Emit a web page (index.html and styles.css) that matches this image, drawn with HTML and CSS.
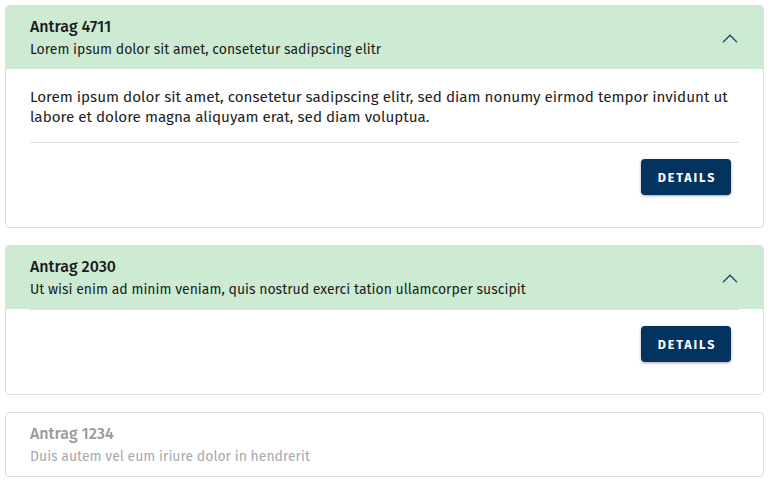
FILE: index.html
```html
<!DOCTYPE html>
<html lang="de">
<head>
<meta charset="utf-8">
<link rel="stylesheet" href="styles.css">
</head>
<body>
<div class="list">
  <section class="card">
    <header class="card-head open">
      <div class="head-text">
        <div class="title">Antrag 4711</div>
        <div class="subtitle">Lorem ipsum dolor sit amet, consetetur sadipscing elitr</div>
      </div>
      <svg class="chev" width="16" height="9" viewBox="0 0 16 9"><path d="M1 8.2 L8 1.2 L15 8.2" fill="none" stroke="#1f4a72" stroke-width="1.4"/></svg>
    </header>
    <div class="card-content">Lorem ipsum dolor sit amet, consetetur sadipscing elitr, sed diam nonumy eirmod tempor invidunt ut labore et dolore magna aliquyam erat, sed diam voluptua.</div>
    <div class="actions"><button class="btn">DETAILS</button></div>
  </section>
  <section class="card">
    <header class="card-head open">
      <div class="head-text">
        <div class="title">Antrag 2030</div>
        <div class="subtitle">Ut wisi enim ad minim veniam, quis nostrud exerci tation ullamcorper suscipit</div>
      </div>
      <svg class="chev" width="16" height="9" viewBox="0 0 16 9"><path d="M1 8.2 L8 1.2 L15 8.2" fill="none" stroke="#1f4a72" stroke-width="1.4"/></svg>
    </header>
    <div class="actions"><button class="btn">DETAILS</button></div>
  </section>
  <section class="card disabled">
    <header class="card-head">
      <div class="head-text">
        <div class="title">Antrag 1234</div>
        <div class="subtitle">Duis autem vel eum iriure dolor in hendrerit</div>
      </div>
    </header>
  </section>
</div>
</body>
</html>
```
FILE: styles.css
```css
* { box-sizing: border-box; }
body {
  margin: 0;
  background: #fff;
  font-family: "Fira Sans", Lato, "Noto Sans", sans-serif;
  color: #1c1c1c;
}
.list {
  padding: 5px 12px 5px 5px;
  display: flex;
  flex-direction: column;
  gap: 17px;
}
.card {
  border: 1px solid #dedede;
  border-radius: 4px;
  overflow: hidden;
  background: #fff;
}
.card-head {
  height: 63px;
  padding: 10px 24px 8px 24px;
  display: flex;
  align-items: center;
  justify-content: space-between;
}
.card-head.open { background: #cdebd3; }
.title {
  font-size: 16px;
  font-weight: 500;
  line-height: 22px;
}
.subtitle {
  font-size: 14px;
  line-height: 23px;
}
.chev { display: block; margin-right: 1px; }
.card-content {
  padding: 18px 24px 15px 24px;
  font-size: 15.2px;
  line-height: 20px;
  color: #1e1e1e;
}
.actions {
  margin: 0 24px;
  border-top: 1px solid #dddddd;
  padding: 16px 8px 32px 0;
  display: flex;
  justify-content: flex-end;
}
.btn {
  width: 90px;
  height: 36px;
  border: none;
  border-radius: 4px;
  background: #03335f;
  color: #fff;
  font-family: inherit;
  font-size: 12.5px;
  font-weight: 700;
  letter-spacing: 1.9px;
  box-shadow: 0 1px 3px rgba(0,0,0,0.35);
  padding: 0 0 0 2px;
}
.disabled .title { color: #9a9a9a; }
.disabled .subtitle { color: #a8a8b0; }
```
